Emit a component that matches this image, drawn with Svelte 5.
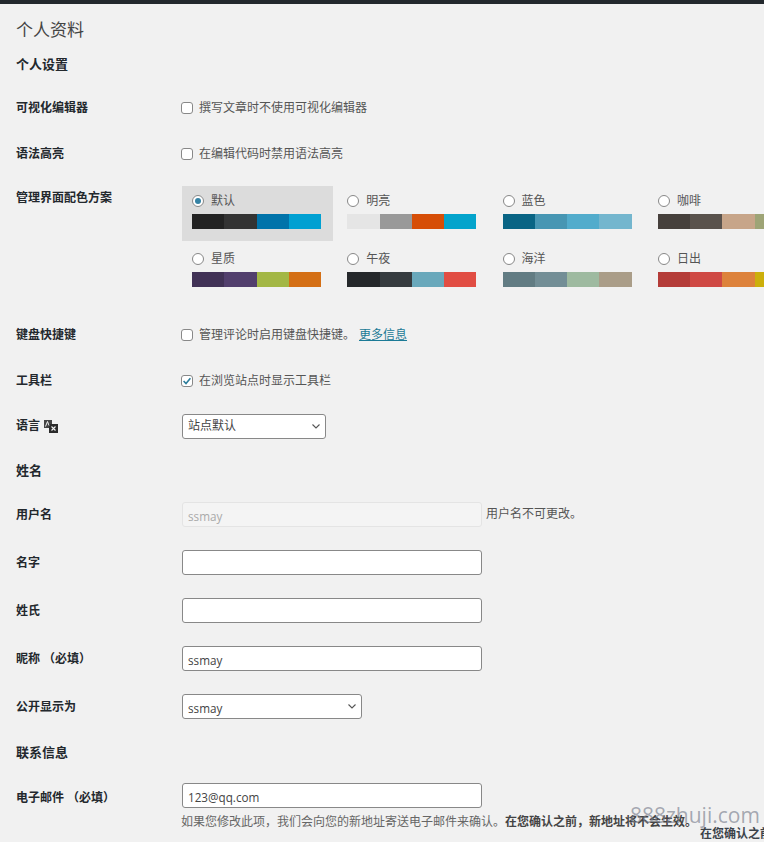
<script>
  const schemes = [
    { name: '默认', colors: ['#222222', '#333333', '#0073aa', '#00a0d2'], selected: true },
    { name: '明亮', colors: ['#e5e5e5', '#999999', '#d64e07', '#04a4cc'] },
    { name: '蓝色', colors: ['#096484', '#4796b3', '#52accc', '#74b6ce'] },
    { name: '咖啡', colors: ['#46403c', '#59524c', '#c7a589', '#9ea476'] },
    { name: '星质', colors: ['#413256', '#523f6d', '#a3b745', '#d46f15'] },
    { name: '午夜', colors: ['#25282b', '#363b3f', '#69a8bb', '#e14d43'] },
    { name: '海洋', colors: ['#627c83', '#738e96', '#9ebaa0', '#aa9d88'] },
    { name: '日出', colors: ['#b43c38', '#cf4944', '#dd823b', '#ccaf0b'] }
  ];
</script>

<div class="bar"></div>
<main class="wrap">
  <h1>个人资料</h1>
  <h2 class="first">个人设置</h2>

  <div class="row r-check first-row">
    <div class="label">可视化编辑器</div>
    <label class="check"><span class="box"></span>撰写文章时不使用可视化编辑器</label>
  </div>
  <div class="row r-check">
    <div class="label">语法高亮</div>
    <label class="check"><span class="box"></span>在编辑代码时禁用语法高亮</label>
  </div>

  <div class="row r-schemes">
    <div class="label">管理界面配色方案</div>
    <div class="schemes">
      {#each schemes as s}
        <div class="scheme" class:selected={s.selected}>
          <div class="scheme-name"><span class="radio"></span>{s.name}</div>
          <div class="swatches">
            {#each s.colors as c}<span style="background:{c}"></span>{/each}
          </div>
        </div>
      {/each}
    </div>
  </div>

  <div class="row r-check r-keys">
    <div class="label">键盘快捷键</div>
    <label class="check"><span class="box"></span>管理评论时启用键盘快捷键。<a href="#more">更多信息</a></label>
  </div>
  <div class="row r-check">
    <div class="label">工具栏</div>
    <label class="check">
      <span class="box checked">
        <svg viewBox="0 0 12 12" width="12" height="12"><path d="M2.6 6 5 8.600 9.400 3.200" fill="none" stroke="#2c7d9b" stroke-width="1.6"/></svg>
      </span>在浏览站点时显示工具栏
    </label>
  </div>
  <div class="row r-lang">
    <div class="label lang">语言
      <svg viewBox="0 0 14 13" width="14" height="13">
        <path d="M0 0h8v8H0z" fill="#444"/>
        <path d="M5 4h9v9H5z" fill="#2b2b2b"/>
        <path d="M1.500 6.500 3.500 1.500l1.500 4" fill="none" stroke="#f1f1f1" stroke-width="1"/>
        <path d="M7.500 6.500l4 4m0-4-4 4" stroke="#f1f1f1" stroke-width="1.100"/>
      </svg>
    </div>
    <div class="select lang-select">站点默认<svg class="chev" viewBox="0 0 8 5" width="8" height="5"><path d="M.5.5l3.500 3.500L7.500.5" fill="none" stroke="#555" stroke-width="1.100"/></svg></div>
  </div>

  <h2 class="name-head">姓名</h2>
  <div class="row r-input r-user">
    <div class="label">用户名</div>
    <div class="input disabled">ssmay</div>
    <span class="note">用户名不可更改。</span>
  </div>
  <div class="row r-input">
    <div class="label">名字</div>
    <div class="input"></div>
  </div>
  <div class="row r-input">
    <div class="label">姓氏</div>
    <div class="input"></div>
  </div>
  <div class="row r-input">
    <div class="label">昵称 （必填）</div>
    <div class="input">ssmay</div>
  </div>
  <div class="row r-input">
    <div class="label">公开显示为</div>
    <div class="select name-select text-low">ssmay<svg class="chev" viewBox="0 0 8 5" width="8" height="5"><path d="M.5.5l3.500 3.500L7.500.5" fill="none" stroke="#555" stroke-width="1.100"/></svg></div>
  </div>

  <h2 class="contact-head">联系信息</h2>
  <div class="row r-input r-mail">
    <div class="label mail-label">电子邮件 （必填）</div>
    <div class="input">123@qq.com</div>
  </div>
  <p class="desc">如果您修改此项，我们会向您的新地址寄送电子邮件来确认。<b>在您确认之前，新地址将不会生效。</b></p>
</main>
<div class="overflow-text">在您确认之前</div>
<div class="watermark">888zhuji.com</div>

<style>
  :global(html), :global(body) {
    margin: 0;
    height: 842px;
    overflow: hidden;
    background: #f1f1f1;
  }
  .bar { height: 4px; background: #23282d; }
  .wrap {
    box-sizing: border-box;
    width: 764px;
    height: 838px;
    overflow: hidden;
    padding-left: 16px;
    color: #555;
    font: 12px/16px "Open Sans", "Noto Sans CJK SC", sans-serif;
  }
  h1 {
    margin: 0;
    padding-top: 15px;
    font-size: 17px;
    line-height: 22px;
    font-weight: 400;
    color: #444;
  }
  h2 {
    margin: 0;
    font-size: 13px;
    line-height: 18px;
    font-weight: 700;
    color: #23282d;
  }
  h2.first { padding-top: 14px; }
  .label {
    width: 166px;
    flex: none;
    font-weight: 700;
    color: #23282d;
  }
  .row { display: flex; align-items: center; }
  .r-check { height: 46px; }
  .first-row { margin-top: 12px; }
  .check { display: flex; align-items: center; }
  .box {
    box-sizing: border-box;
    flex: none;
    width: 12px;
    height: 12px;
    margin: 0 6px 0 -1px;
    border: 1px solid #888;
    border-radius: 3px;
    background: #fff;
    position: relative;
  }
  .box.checked svg { position: absolute; left: -1px; top: -1px; }
  a { margin-left: 4px; color: #1b7a96; text-decoration: underline; }

  .r-schemes { align-items: flex-start; padding-top: 9px; }
  .r-schemes .label { padding-top: 4px; }
  .schemes {
    display: grid;
    grid-template-columns: repeat(4, 151px);
    column-gap: 4.3px;
    row-gap: 3px;
  }
  .scheme { box-sizing: border-box; height: 55px; padding: 7px 11px 0 10px; }
  .scheme.selected { background: #dcdcdc; }
  .scheme-name { display: flex; align-items: center; height: 16px; color: #555; }
  .radio {
    box-sizing: border-box;
    width: 12px;
    height: 12px;
    margin-right: 7px;
    border: 1px solid #888;
    border-radius: 50%;
    background: #fff;
    position: relative;
  }
  .selected .radio::after {
    content: "";
    position: absolute;
    inset: 2px;
    border-radius: 50%;
    background: #3582a4;
  }
  .swatches { display: flex; margin-top: 5px; height: 15px; width: 129px; }
  .swatches span { flex: 1; }

  .r-keys { margin-top: 13px; }
  .r-lang { height: 44px; }
  .lang { display: flex; align-items: center; gap: 4px; }
  .select {
    box-sizing: border-box;
    height: 25px;
    padding: 0 5px;
    display: flex;
    align-items: center;
    justify-content: space-between;
    border: 1px solid #888;
    border-radius: 3px;
    background: #fff;
    color: #444;
  }
  .text-low { padding-top: 3px; font-size: 11.7px; }
  .text-low svg { margin-top: -3px; }
  .lang-select { width: 144px; }
  .name-select { width: 180px; }
  .name-head { height: 18px; padding-top: 13px; }
  .r-input { height: 48px; }
  .r-input .label { padding-top: 2px; }
  .r-user { margin-top: 11px; }
  .input {
    box-sizing: border-box;
    width: 300px;
    height: 25px;
    padding: 3px 5px 0;
    display: flex;
    align-items: center;
    border: 1px solid #888;
    border-radius: 3px;
    background: #fff;
    color: #444;
    font-size: 11.7px;
  }
  .input.disabled { background: #f4f4f4; border-color: #e4e4e4; color: #aaa; }
  .note { margin-left: 4px; }
  .contact-head { padding-top: 13px; }
  .r-mail { margin-top: 10px; }
  .r-input .mail-label { padding-top: 6px; }
  .desc {
    margin: -5px 0 0 165px;
    white-space: nowrap;
    color: #666;
    line-height: 16px;
  }
  .desc b { color: #444; }
  .overflow-text {
    position: absolute;
    left: 700px;
    top: 825px;
    font: 700 12px/16px "Noto Sans CJK SC", sans-serif;
    white-space: nowrap;
    color: #3c434a;
  }
  .watermark {
    position: absolute;
    left: 630px;
    top: 802px;
    font: 21px/26px "Open Sans", sans-serif;
    color: rgba(120, 125, 140, 0.65);
    white-space: nowrap;
  }
</style>
